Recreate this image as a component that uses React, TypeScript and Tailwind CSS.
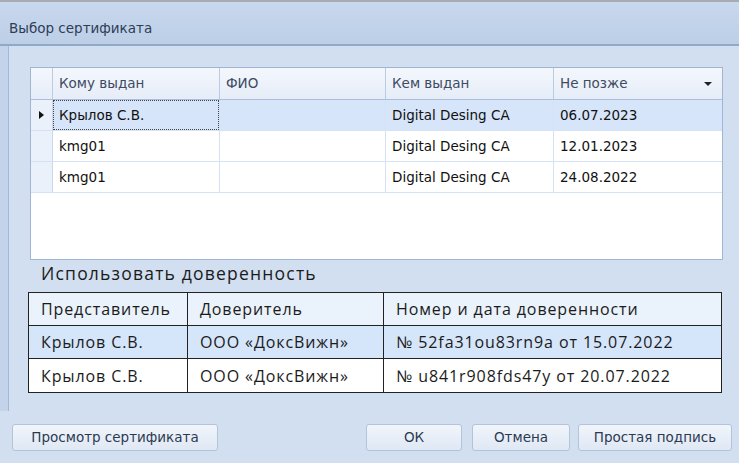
import React from "react";

const gridFont = { fontFamily: '"DejaVu Sans", sans-serif' };
const tblFont = { fontFamily: '"Open Sans", sans-serif' };

function Btn({ children, w }: { children: React.ReactNode; w: string }) {
  return (
    <div
      className={`${w} h-[27px] flex items-center justify-center rounded-[3px] border border-[#b3c4da] bg-gradient-to-b from-[#f1f5fb] to-[#dfe8f4] text-[13.5px] text-[#2b3a52]`}
      style={gridFont}
    >
      {children}
    </div>
  );
}

export default function App() {
  const rows = [
    ["Крылов С.В.", "", "Digital Desing CA", "06.07.2023"],
    ["kmg01", "", "Digital Desing CA", "12.01.2023"],
    ["kmg01", "", "Digital Desing CA", "24.08.2022"],
  ];
  const cols = ["w-[167px]", "w-[166px]", "w-[168px]", "flex-1"];
  const trust = [
    ["Крылов С.В.", "ООО «ДоксВижн»", "№ 52fa31ou83rn9a от 15.07.2022"],
    ["Крылов С.В.", "ООО «ДоксВижн»", "№ u841r908fds47y от 20.07.2022"],
  ];
  return (
    <div className="w-[739px] h-[463px] overflow-hidden flex flex-col bg-[#d1dff0]">
      <div className="h-[2px] bg-[#a8acb2]" />
      <div
        className="h-[44px] flex items-center pl-[9px] pt-[10px] bg-gradient-to-b from-[#c8d8ed] to-[#bccfe7] border-b-2 border-[#8fa9c9] text-[13.5px] text-[#2e3d57]"
        style={gridFont}
      >
        Выбор сертификата
      </div>
      <div className="h-[365px] flex">
        <div className="w-[9px] bg-[#c3d4ea] border-r border-[#a3b8d4]" />
        <div className="flex-1 flex flex-col">
          {/* grid */}
          <div className="ml-[21px] mt-[21px] w-[693px] h-[193px] border border-[#9fb5d3] bg-white flex flex-col" style={gridFont}>
            <div className="h-[32px] shrink-0 flex border-b border-[#a9bfdc] bg-gradient-to-b from-[#f4f7fc] to-[#e6edf8] text-[13.5px] text-[#3d4a63]">
              <div className="w-[22px] border-r border-[#b9cce4]" />
              {["Кому выдан", "ФИО", "Кем выдан", "Не позже"].map((h, i) => (
                <div
                  key={h}
                  className={`${cols[i]} flex items-center pl-[6px] ${i < 3 ? "border-r border-[#b9cce4]" : "pr-[10px]"}`}
                >
                  <span className="flex-1">{h}</span>
                  {i === 3 && (
                    <svg width="8" height="4" viewBox="0 0 8 4">
                      <path d="M0 0h8L4 4z" fill="#222" />
                    </svg>
                  )}
                </div>
              ))}
            </div>
            {rows.map((r, ri) => (
              <div
                key={ri}
                className={`h-[31px] shrink-0 flex border-b border-[#d5e2f3] text-[13.5px] text-[#111] ${ri === 0 ? "bg-[#d6e5f9]" : "bg-white"}`}
              >
                <div className="w-[22px] border-r border-[#c9d8ec] bg-[#eaf1fa] flex items-center justify-center">
                  {ri === 0 && (
                    <svg width="5" height="8" viewBox="0 0 5 8">
                      <path d="M0 0L5 4L0 8z" fill="#111" />
                    </svg>
                  )}
                </div>
                {r.map((c, ci) => (
                  <div
                    key={ci}
                    className={`${cols[ci]} flex ${ci < 3 ? "border-r border-[#d5e2f3]" : ""}`}
                  >
                    {ri === 0 && ci === 0 ? (
                      <div className="flex-1 flex items-center pl-[5px] border border-dotted border-[#444]">{c}</div>
                    ) : (
                      <div className="flex-1 flex items-center pl-[6px]">{c}</div>
                    )}
                  </div>
                ))}
              </div>
            ))}
          </div>
          {/* trust label */}
          <div className="ml-[32px] h-[27px] flex items-center text-[17.5px] text-[#1b1b1b] tracking-[1.2px]" style={tblFont}>
            Использовать доверенность
          </div>
          <div className="ml-[19px] mt-[5px] w-[694px] border border-[#222] flex flex-col text-[16px] text-[#1b1b1b] tracking-[0.9px]" style={tblFont}>
            {[["Представитель", "Доверитель", "Номер и дата доверенности"], ...trust].map((r, ri) => (
              <div
                key={ri}
                className={`h-[33px] flex ${ri < 2 ? "border-b border-[#222]" : ""} ${ri === 0 ? "bg-[#eaf2fb]" : ri === 1 ? "bg-[#d5e5fa]" : "bg-white"}`}
              >
                {r.map((c, ci) => (
                  <div
                    key={ci}
                    className={`${ci === 0 ? "w-[159px]" : ci === 1 ? "w-[196px]" : "flex-1"} ${ci < 2 ? "border-r border-[#222]" : ""} flex items-center pl-[12px]`}
                  >
                    {c}
                  </div>
                ))}
              </div>
            ))}
          </div>
        </div>
      </div>
      <div className="flex pl-[12px] pr-[7px] mt-[13px]">
        <Btn w="w-[206px]">Просмотр сертификата</Btn>
        <div className="flex-1" />
        <Btn w="w-[96px]">ОК</Btn>
        <div className="w-[10px]" />
        <Btn w="w-[98px]">Отмена</Btn>
        <div className="w-[8px]" />
        <Btn w="w-[154px]">Простая подпись</Btn>
      </div>
    </div>
  );
}
